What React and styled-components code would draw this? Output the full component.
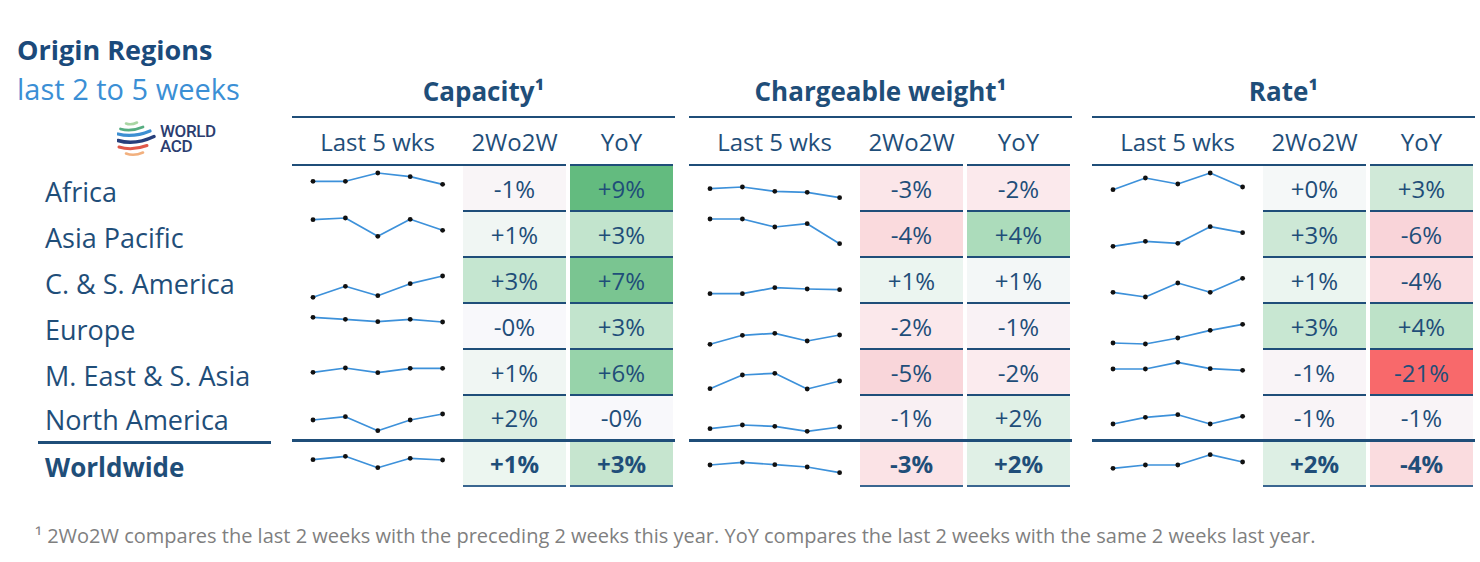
import React from 'react';
import styled, { createGlobalStyle } from 'styled-components';

const NAVY = '#1f4e79';

const Global = createGlobalStyle`
  html, body { margin: 0; padding: 0; background: #ffffff; }
  body { font-family: "Open Sans", Lato, sans-serif; color: ${NAVY}; }
`;

const Page = styled.div`
  width: 1480px;
  height: 562px;
  overflow: hidden;
  background: #fff;
`;

const Board = styled.div`
  display: flex;
  align-items: flex-start;
  padding-left: 17px;
`;

const LeftCol = styled.div`
  width: 275px;
  display: flex;
  flex-direction: column;
`;

const TitleBlock = styled.div`
  height: 168px;
  display: flex;
  flex-direction: column;
  align-items: flex-start;
`;

const Title = styled.div`
  margin-top: 34px;
  font-size: 27px;
  line-height: 32px;
  font-weight: 700;
  color: #1b4a7b;
  white-space: nowrap;
`;

const Subtitle = styled.div`
  margin-top: 7px;
  font-size: 29px;
  line-height: 32px;
  color: #3b8fd5;
  white-space: nowrap;
`;

const Logo = styled.div`
  margin-top: 15px;
  margin-left: 100px;
  display: flex;
  align-items: center;
  gap: 4px;
  height: 38px;
`;

const LogoWord = styled.svg`
  display: block;
  font-family: Roboto, "Liberation Sans", sans-serif;
  font-weight: 500;
  letter-spacing: -0.4px;
  fill: #2b3d70;
`;

const LabelRow = styled.div`
  height: ${p => p.$h}px;
  display: flex;
  align-items: center;
  padding-left: 28px;
  font-size: ${p => (p.$bold ? 26 : 27)}px;
  font-weight: ${p => (p.$bold ? 700 : 400)};
  white-space: nowrap;
`;

const LeftRule = styled.div`
  margin-left: 21px;
  width: 233px;
  height: 3px;
  background: ${NAVY};
`;

const Section = styled.div`
  width: 383px;
  margin-left: ${p => p.$ml}px;
  display: flex;
  flex-direction: column;
`;

const SectionTitle = styled.div`
  box-sizing: border-box;
  height: 118px;
  border-bottom: 2px solid ${NAVY};
  display: flex;
  align-items: flex-end;
  justify-content: center;
  padding-bottom: 10px;
  font-size: 26px;
  line-height: 30px;
  font-weight: 700;
  white-space: nowrap;
`;

const Row = styled.div`
  display: flex;
  height: ${p => p.$h}px;
`;

const SubCell = styled.div`
  box-sizing: border-box;
  width: ${p => p.$w}px;
  margin-left: ${p => p.$gap || 0}px;
  height: 48px;
  border-bottom: 2px solid ${NAVY};
  display: flex;
  align-items: center;
  justify-content: center;
  font-size: 24px;
  white-space: nowrap;
`;

const SparkCell = styled.div`
  width: 171px;
  height: 100%;
  flex: none;
`;

const ValueCell = styled.div`
  box-sizing: border-box;
  width: 103px;
  flex: none;
  margin-left: ${p => p.$gap || 0}px;
  height: 100%;
  background: ${p => p.$bg};
  border-bottom: ${p => (p.$border ? `2px solid ${p.$borderColor || NAVY}` : 'none')};
  display: flex;
  align-items: center;
  justify-content: center;
  font-size: 24px;
  font-weight: ${p => (p.$bold ? 700 : 400)};
`;

const SectionRule = styled.div`
  height: 3px;
  background: ${NAVY};
`;

const Footnote = styled.div`
  margin-top: 35px;
  padding-left: 35px;
  font-size: 20px;
  line-height: 24px;
  color: #7f7f7f;
  white-space: nowrap;
`;

const regions = ['Africa', 'Asia Pacific', 'C. & S. America', 'Europe', 'M. East & S. Asia', 'North America'];
const rowHeights = [46, 46, 46, 46, 46, 43];

const sections = [
  {
    title: 'Capacity¹',
    ml: 0,
    rows: [
      { s: [15.3, 15.3, 7, 10.7, 18.3], a: ['-1%', '#f9f5f7'], b: ['+9%', '#63bb7f'] },
      { s: [7.7, 6, 24.3, 7.3, 18.3], a: ['+1%', '#f0f6f3'], b: ['+3%', '#c2e4cd'] },
      { s: [39.3, 28.3, 37.7, 25.7, 18], a: ['+3%', '#c5e6d0'], b: ['+7%', '#7ac591'] },
      { s: [13.3, 15.3, 17.7, 15.3, 18], a: ['-0%', '#f8f8fb'], b: ['+3%', '#c2e4cd'] },
      { s: [22.3, 18, 22.7, 18.3, 18.3], a: ['+1%', '#f0f6f3'], b: ['+6%', '#97d3aa'] },
      { s: [24, 20.7, 34.7, 24, 18], a: ['+2%', '#dcefe3'], b: ['-0%', '#f8f8fb'] },
    ],
    ww: { s: [17.7, 14.3, 25.7, 16.3, 18], a: ['+1%', '#ecf6f0'], b: ['+3%', '#c6e5cf'] },
  },
  {
    title: 'Chargeable weight¹',
    ml: 14,
    rows: [
      { s: [22.7, 21, 25.3, 26.3, 31.7], a: ['-3%', '#fbe6e9'], b: ['-2%', '#fbe9ec'] },
      { s: [7, 7, 15, 11.7, 31.7], a: ['-4%', '#fadadd'], b: ['+4%', '#acdcbb'] },
      { s: [35.7, 35.7, 29.7, 31, 31.7], a: ['+1%', '#ebf5f0'], b: ['+1%', '#f3f7f7'] },
      { s: [40.3, 31.3, 29.3, 37, 31], a: ['-2%', '#fbe8eb'], b: ['-1%', '#f9f2f5'] },
      { s: [38.7, 25, 23.3, 39, 31], a: ['-5%', '#f9d6da'], b: ['-2%', '#fbebee'] },
      { s: [32.7, 29, 30.3, 35.3, 31], a: ['-1%', '#f9f0f3'], b: ['+2%', '#e0f0e6'] },
    ],
    ww: { s: [23, 20.3, 22.7, 25, 30.7], a: ['-3%', '#fbe3e6'], b: ['+2%', '#e0f0e6'] },
  },
  {
    title: 'Rate¹',
    ml: 20,
    rows: [
      { s: [23.7, 12, 18, 7, 21], a: ['+0%', '#f5f8f8'], b: ['+3%', '#d0e9d8'] },
      { s: [34.3, 29.3, 31.3, 14.7, 20.7], a: ['+3%', '#cde8d6'], b: ['-6%', '#f9d4d9'] },
      { s: [34.3, 39, 25, 34.3, 20.3], a: ['+1%', '#ebf5f0'], b: ['-4%', '#fadde1'] },
      { s: [39, 40, 34, 26.3, 20.3], a: ['+3%', '#c8e7d2'], b: ['+4%', '#bde2c8'] },
      { s: [19, 19, 12.3, 18.7, 20.3], a: ['-1%', '#f9f4f7'], b: ['-21%', '#f8696b'] },
      { s: [28, 21.3, 18.7, 28, 20.3], a: ['-1%', '#f9f4f7'], b: ['-1%', '#f9f4f7'] },
    ],
    ww: { s: [26.3, 23, 23, 12.7, 20], a: ['+2%', '#ddefe4'], b: ['-4%', '#fadcdf'] },
  },
];

function Spark({ data }) {
  const pts = data.map((y, i) => [21 + i * 32.4, y]);
  return (
    <svg width="171" height="46" viewBox="0 0 171 46" style={{ display: 'block', overflow: 'visible' }}>
      <polyline
        points={pts.map(p => p.join(',')).join(' ')}
        fill="none"
        stroke="#3d91da"
        strokeWidth="1.7"
        strokeLinejoin="round"
      />
      {pts.map((p, i) => (
        <circle key={i} cx={p[0]} cy={p[1]} r="2.4" fill="#111" />
      ))}
    </svg>
  );
}

function LogoMark() {
  const bands = [
    { d: 'M9 3.5 Q14 5.5 20 2.5', c: '#a9d6a3', w: 2.6 },
    { d: 'M3.5 9 Q14 12 26 7', c: '#55ad80', w: 2.8 },
    { d: 'M1 14 Q16 18 33 11', c: '#3d8fd2', w: 3.2 },
    { d: 'M1 20.5 Q18 25.5 37 16.5', c: '#273f7c', w: 3.4 },
    { d: 'M2 27 Q15 31 30 25.5', c: '#e1594a', w: 3.0 },
    { d: 'M9 33.5 Q17 36.5 26 32.5', c: '#f2b07e', w: 2.6 },
  ];
  return (
    <svg width="39" height="38" viewBox="0 0 39 38">
      {bands.map((b, i) => (
        <path key={i} d={b.d} fill="none" stroke={b.c} strokeWidth={b.w} strokeLinecap="round" />
      ))}
    </svg>
  );
}

export default function App() {
  return (
    <Page>
      <Global />
      <Board>
        <LeftCol>
          <TitleBlock>
            <Title>Origin Regions</Title>
            <Subtitle>last 2 to 5 weeks</Subtitle>
            <Logo>
              <LogoMark />
              <LogoWord width="60" height="36" viewBox="0 0 60 36">
                <text x="0" y="16" fontSize="17">WORLD</text>
                <text x="0" y="30.5" fontSize="17">ACD</text>
              </LogoWord>
            </Logo>
          </TitleBlock>
          {regions.map((r, i) => (
            <LabelRow key={r} $h={rowHeights[i]}>
              {r}
            </LabelRow>
          ))}
          <LeftRule />
          <LabelRow $h={45} $bold>
            Worldwide
          </LabelRow>
        </LeftCol>
        {sections.map(sec => (
          <Section key={sec.title} $ml={sec.ml}>
            <SectionTitle>{sec.title}</SectionTitle>
            <Row $h={48}>
              <SubCell $w={171}>Last 5 wks</SubCell>
              <SubCell $w={103}>2Wo2W</SubCell>
              <SubCell $w={103} $gap={4}>
                YoY
              </SubCell>
            </Row>
            {sec.rows.map((row, i) => (
              <Row key={i} $h={rowHeights[i]}>
                <SparkCell>
                  <Spark data={row.s} />
                </SparkCell>
                <ValueCell $bg={row.a[1]} $border={i < 5}>
                  {row.a[0]}
                </ValueCell>
                <ValueCell $bg={row.b[1]} $border={i < 5} $gap={4}>
                  {row.b[0]}
                </ValueCell>
              </Row>
            ))}
            <SectionRule />
            <Row $h={45}>
              <SparkCell>
                <Spark data={sec.ww.s} />
              </SparkCell>
              <ValueCell $bg={sec.ww.a[1]} $border $borderColor="#3a6690" $bold>
                {sec.ww.a[0]}
              </ValueCell>
              <ValueCell $bg={sec.ww.b[1]} $border $borderColor="#3a6690" $gap={4} $bold>
                {sec.ww.b[0]}
              </ValueCell>
            </Row>
          </Section>
        ))}
      </Board>
      <Footnote>
        ¹ 2Wo2W compares the last 2 weeks with the preceding 2 weeks this year. YoY compares the last 2 weeks with the same 2 weeks last year.
      </Footnote>
    </Page>
  );
}
